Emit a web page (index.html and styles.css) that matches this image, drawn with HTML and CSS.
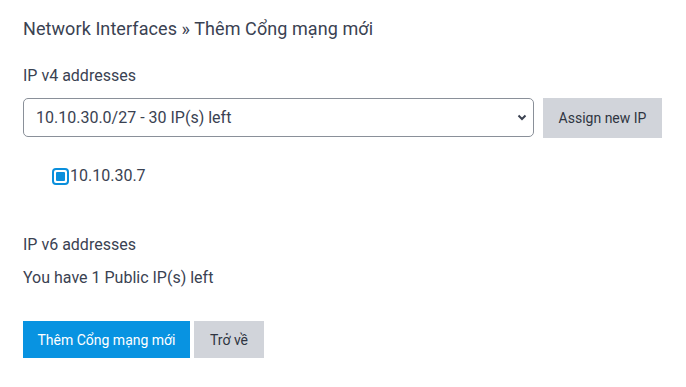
FILE: index.html
```html
<!DOCTYPE html>
<html>
<head>
<meta charset="utf-8">
<link rel="stylesheet" href="styles.css">
</head>
<body>
<div class="page">
  <h1 class="title">Network Interfaces » Thêm Cổng mạng mới</h1>
  <div class="label v4">IP v4 addresses</div>
  <div class="row">
    <div class="select">
      <span>10.10.30.0/27 - 30 IP(s) left</span>
      <svg class="chev" width="10" height="7" viewBox="0 0 10 7"><path d="M1.5 1.5 L5 5 L8.5 1.5" fill="none" stroke="#3b4251" stroke-width="2"/></svg>
    </div>
    <button class="btn grey assign">Assign new IP</button>
  </div>
  <div class="ip">
    <span class="check"><span class="fill"></span></span>
    <span>10.10.30.7</span>
  </div>
  <div class="label v6">IP v6 addresses</div>
  <div class="label left">You have 1 Public IP(s) left</div>
  <div class="actions">
    <button class="btn blue">Thêm Cổng mạng mới</button>
    <button class="btn grey back">Trở về</button>
  </div>
</div>
</body>
</html>
```

FILE: styles.css
```css
* { box-sizing: border-box; }
html, body { margin: 0; padding: 0; background: #fff; }
body {
  font-family: Roboto, "Liberation Sans", sans-serif;
  color: #3a4252;
  width: 686px;
  height: 387px;
  overflow: hidden;
}
.page { padding: 17px 24px 0 23px; }
.title {
  margin: 0;
  font-size: 18px;
  font-weight: 400;
  line-height: 24px;
  letter-spacing: 0.08px;
  color: #3a4252;
}
.label { font-size: 16px; line-height: 20px; }
.v4 { margin-top: 25px; }
.row {
  display: flex;
  gap: 9px;
  margin-top: 12px;
  height: 40px;
}
.select {
  width: 511px;
  height: 39px;
  border: 1px solid #8a9099;
  border-radius: 5px;
  display: flex;
  align-items: center;
  justify-content: space-between;
  padding: 0 6px 0 12px;
  font-size: 16px;
}
.btn {
  font-family: Roboto, "Liberation Sans", sans-serif;
  font-size: 14px;
  border: none;
  border-radius: 0;
  padding: 0;
  cursor: pointer;
}
.grey { background: #d1d4da; color: #2f3541; }
.assign { width: 119px; height: 40px; }
.ip {
  display: flex;
  align-items: center;
  margin: 28px 0 0 29px;
  font-size: 16px;
  line-height: 20px;
  gap: 1px;
}
.check {
  width: 17px;
  height: 17px;
  border: 2px solid #0a8fdc;
  border-radius: 4px;
  padding: 2px;
  background: #fff;
  display: inline-block;
}
.fill { display: block; width: 100%; height: 100%; background: #0a8fdc; border-radius: 1px; }
.v6 { margin-top: 49px; }
.left { margin-top: 13px; }
.actions { display: flex; gap: 4px; margin-top: 33px; }
.blue { background: #0893e1; color: #fff; width: 167px; height: 37px; }
.back { width: 70px; height: 37px; }
```
